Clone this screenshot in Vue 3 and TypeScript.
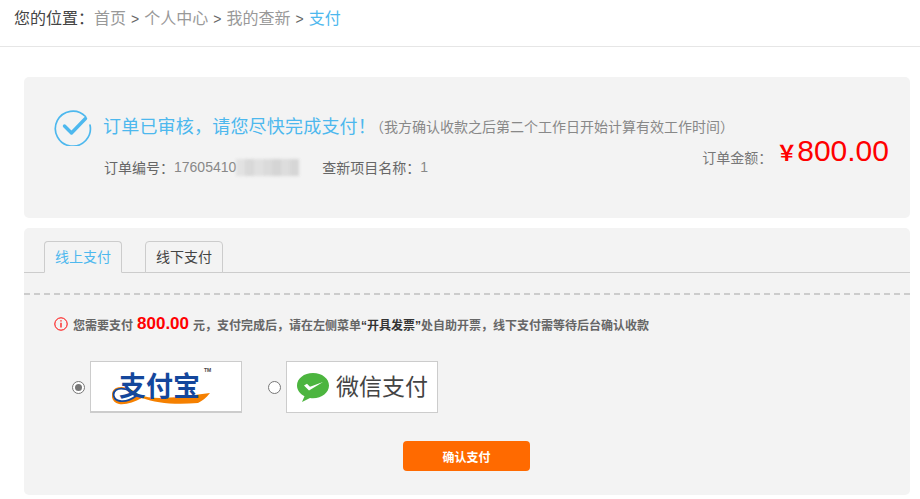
<script setup lang="ts">
const crumbs: string[] = ['首页', '个人中心', '我的查新']
const blur: { w: number; o: number }[] = [
  { w: 9, o: 0.55 }, { w: 9, o: 0.85 }, { w: 9, o: 0.6 }, { w: 9, o: 0.75 },
  { w: 9, o: 0.95 }, { w: 9, o: 0.7 }, { w: 9, o: 0.9 }
]
</script>

<template>
  <div class="page">
    <header class="crumbs">
      <span class="here">您的位置：</span>
      <template v-for="c in crumbs" :key="c">
        <span class="link">{{ c }}</span><span class="sep">&gt;</span>
      </template>
      <span class="current">支付</span>
    </header>

    <main class="main">
      <section class="card order">
        <div class="order-info">
          <div class="status">
            <svg class="check" width="38" height="38" viewBox="0 0 38 38" fill="none">
              <path d="M31.500 8.500A17.500 17.500 0 1 0 36 17" stroke="#4db8ee" stroke-width="1.700" stroke-linecap="round" />
              <path d="M10.500 18 L17.500 25 L31.500 10.500" stroke="#4db8ee" stroke-width="3.400" stroke-linecap="round" stroke-linejoin="round" />
            </svg>
            <span class="status-title">订单已审核，请您尽快完成支付！</span>
            <span class="status-note">（我方确认收款之后第二个工作日开始计算有效工作时间）</span>
          </div>
          <div class="meta">
            <span class="meta-label">订单编号：</span><span class="meta-value">17605410</span>
            <span class="redact"><i v-for="(b, i) in blur" :key="i" :style="{ width: b.w + 'px', opacity: b.o }"></i></span>
            <span class="meta-label name-label">查新项目名称：</span><span class="meta-value">1</span>
          </div>
        </div>
        <div class="amount">
          <span class="amount-label">订单金额：</span>
          <span class="amount-yen">￥</span>
          <span class="amount-value">800.00</span>
        </div>
      </section>

      <section class="card pay">
        <div class="tabs">
          <div class="tab active">线上支付</div>
          <div class="tab">线下支付</div>
        </div>
        <div class="dash"></div>
        <p class="notice">
          <svg width="14" height="14" viewBox="0 0 14 14" fill="none" class="info">
            <circle cx="7" cy="7" r="6.200" stroke="#f00" stroke-width="1" />
            <path d="M7 5.800V10.600M7 3.200V4.600" stroke="#f00" stroke-width="1.200" />
          </svg>
          <span>您需要支付</span>
          <b class="sum">800.00</b>
          <span>元，支付完成后，请在左侧菜单</span><em>“开具发票”</em><span>处自助开票，线下支付需等待后台确认收款</span>
        </p>
        <div class="methods">
          <label class="method">
            <span class="radio checked"></span>
            <span class="logo alipay">
              <svg class="swoosh" width="100" height="20" viewBox="0 0 100 20">
                <path d="M24 10C18 3 9 1 4 4 0 7 1 14 8 15 14 16 20 13 24 10L28 9C40 14 62 12 98 7 94 12 90 15 86 17 62 19 44 17 30 12 22 16 14 19 7 18-2 16-2 5 4 2 11-1 20 3 26 8Z" fill="#f58000" />
                <path d="M24 10C18 3 9 1 4 4 0 7 1 14 8 15 14 16 20 13 24 10Z" fill="none" stroke="#14479c" stroke-width="1.800" />
              </svg>
              <span class="ali-text">支付宝</span>
              <span class="tm">TM</span>
            </span>
          </label>
          <label class="method">
            <span class="radio"></span>
            <span class="logo wechat">
              <svg width="34" height="31" viewBox="0 0 34 31">
                <path d="M17 1C8 1 1 6.500 1 13.500 1 18 4 22 8.500 24.300L6 30 14 26C15 26.100 16 26.200 17 26.200 26 26.200 33 20.500 33 13.500 33 6.500 26 1 17 1Z" fill="#4cb53f" />
                <path d="M8 13.500 13 18.500 27 10 14 14.800 11 11.800Z" fill="#fff" />
              </svg>
              <span class="wx-text">微信支付</span>
            </span>
          </label>
        </div>
        <div class="actions">
          <button class="confirm" type="button">确认支付</button>
        </div>
      </section>
    </main>
  </div>
</template>

<style>
html, body { margin: 0; background: #fff; }
</style>

<style scoped>
.page {
  width: 920px;
  height: 499px;
  overflow: hidden;
  font-family: "Liberation Sans", "Noto Sans CJK SC", sans-serif;
  color: #666;
  box-sizing: border-box;
  white-space: nowrap;
}
.crumbs {
  height: 46px;
  border-bottom: 1px solid #e6e6e6;
  padding-left: 14px;
  display: flex;
  align-items: flex-start;
  font-size: 16px;
  line-height: 38px;
  color: #999;
}
.here { color: #444; }
.link { color: #999; }
.sep { color: #666; margin: 0 5px; font-size: 14px; }
.current { color: #4db8ee; }
.main { padding: 30px 10px 0 24px; display: flex; flex-direction: column; gap: 10px; }
.card { background: #f3f3f3; border-radius: 5px; }
.order {
  height: 141px;
  display: flex;
  justify-content: space-between;
  box-sizing: border-box;
  padding: 31px 21px 0 30px;
}
.order-info { width: 620px; flex: none; }
.status { display: flex; align-items: center; height: 38px; }
.check { flex: none; margin-right: 11px; }
.status-title { color: #4db8ee; font-size: 18px; letter-spacing: 0.2px; margin-bottom: 4px; }
.status-note { color: #888; font-size: 14px; margin-left: -6px; margin-bottom: 2px; }
.meta {
  display: flex;
  align-items: center;
  margin-left: 50px;
  margin-top: 10px;
  font-size: 14px;
  height: 22px;
}
.meta-label { color: #666; }
.meta-value { color: #888; }
.redact { display: inline-flex; height: 17px; filter: blur(1.500px); }
.redact i { display: block; background: #d3d3d3; }
.name-label { margin-left: 23px; }
.amount { display: flex; align-items: flex-end; margin-top: 24px; height: 38px; flex: none; }
.amount-label { font-size: 14px; color: #777; margin-right: 4px; line-height: 20px; margin-bottom: 2px; }
.amount-yen {
  color: #f00;
  font-family: "Noto Sans CJK SC", sans-serif;
  font-size: 21px;
  font-weight: 700;
  line-height: 38px;
}
.amount-value { color: #f00; font-size: 30px; line-height: 38px; }
.pay { height: 267px; }
.tabs {
  height: 45px;
  box-sizing: border-box;
  padding: 13px 0 0 20px;
  display: flex;
  gap: 23px;
  border-bottom: 1px solid #ccc;
}
.tab {
  width: 78px;
  height: 32px;
  box-sizing: border-box;
  border: 1px solid #ccc;
  border-radius: 4px 4px 0 0;
  text-align: center;
  font-size: 14px;
  line-height: 30px;
  color: #444;
  background: #f3f3f3;
}
.tab.active { color: #4db8ee; border-bottom-color: #f3f3f3; }
.dash {
  margin-top: 20px;
  height: 0;
  border-top: 2px dashed #ccc;
}
.notice {
  margin: 19px 0 0 30px;
  display: flex;
  align-items: center;
  height: 20px;
  font-size: 12px;
  font-weight: 700;
  color: #666;
}
.info { margin-right: 5px; flex: none; }
.sum { color: #f00; font-size: 17px; margin: 0 4px; }
.notice em { font-style: normal; color: #333; }
.methods { display: flex; margin-top: 27px; padding-left: 48px; gap: 26px; }
.method { display: flex; align-items: center; gap: 5px; }
.radio {
  width: 13px;
  height: 13px;
  border-radius: 50%;
  box-sizing: border-box;
  border: 1px solid #777;
  background: #fff;
  position: relative;
  flex: none;
}
.radio.checked::after {
  content: "";
  position: absolute;
  inset: 2px;
  border-radius: 50%;
  background: #777;
}
.logo {
  display: block;
  width: 152px;
  height: 52px;
  box-sizing: border-box;
  border: 1px solid #ccc;
  background: #fff;
  position: relative;
  overflow: hidden;
}
.alipay { border-bottom-width: 2px; }
.ali-text {
  position: absolute;
  left: 28px;
  top: 8px;
  font-size: 27px;
  line-height: 30px;
  font-weight: 700;
  color: #14479c;
  font-family: "Noto Sans CJK SC", sans-serif;
}
.tm { position: absolute; left: 113px; top: 5px; font-size: 5px; font-weight: 700; color: #444; }
.swoosh { position: absolute; left: 21px; top: 24px; }
.wechat { display: flex; align-items: center; gap: 6px; padding-left: 9px; }
.wechat svg { flex: none; margin-top: 1px; }
.wx-text { color: #444; font-size: 23px; line-height: 28px; }
.actions { display: flex; padding-left: 379px; margin-top: 28px; }
.confirm {
  width: 127px;
  height: 30px;
  border: 0;
  border-radius: 4px;
  background: #ff6a00;
  color: #fff;
  font-family: inherit;
  font-size: 12px;
  font-weight: 700;
  padding: 0;
}
</style>
